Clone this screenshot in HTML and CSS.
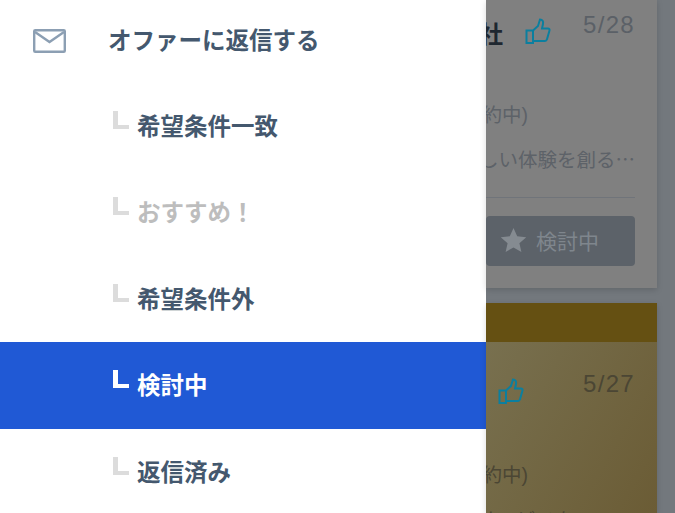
FILE: index.html
```html
<!DOCTYPE html>
<html lang="ja">
<head>
    <meta charset="UTF-8">
    <meta name="viewport" content="width=device-width, initial-scale=1.0">
    <title>オファーに返信する</title>
    <link rel="stylesheet" href="styles.css">
</head>
<body>
    <div class="page">
        <nav class="drawer">
            <div class="menu-head">
                <svg class="mail-icon" width="33" height="24" viewBox="0 0 33 24" fill="none" stroke="#8c9fb3" stroke-width="2.4">
                    <rect x="1.2" y="1.2" width="30.600" height="21.600" rx="1"/>
                    <path d="M2 3l14.500 10L31 3"/>
                </svg>
                <span>オファーに返信する</span>
            </div>
            <a class="menu-item"><i class="branch"></i>希望条件一致</a>
            <a class="menu-item disabled"><i class="branch"></i>おすすめ！</a>
            <a class="menu-item"><i class="branch"></i>希望条件外</a>
            <a class="menu-item active"><i class="branch"></i>検討中</a>
            <a class="menu-item"><i class="branch"></i>返信済み</a>
        </nav>

        <main class="list">
            <div class="card first">
                <div class="card-top">
                    <span class="company">株式会社</span>
                    <svg class="thumb" width="26" height="27" viewBox="0 0 26 27" fill="none" stroke="#0b7f9f" stroke-width="2">
                        <path d="M1.500 12.500h6.500v12.500H1.500zM8 12.500l5-4.500 2-6.500c2.500 0 3.500 2 3 4.500l-1 4.500h6c1.200 0 1.800 1 1.500 2l-2.500 8.800c-.3 1-1 1.700-2 1.700H8"/>
                    </svg>
                    <span class="date">5/28</span>
                </div>
                <p class="line place">東京都渋谷区(集約中)</p>
                <p class="line desc">世界に新しい体験を創る⋯</p>
                <div class="divider"></div>
                <div class="keep-btn">
                    <svg width="25" height="24" viewBox="0 0 25 24"><path fill="#858b91" d="M12.500 0l3.700 8.300 9 .9-6.800 6 2 8.800-7.900-4.600-7.900 4.600 2-8.800-6.800-6 9-.9z"/></svg>
                    <span>検討中</span>
                </div>
            </div>

            <div class="card second">
                <div class="card-band"></div>
                <div class="card-body">
                    <div class="card-top">
                        <svg class="thumb" width="26" height="27" viewBox="0 0 26 27" fill="none" stroke="#0b7f9f" stroke-width="2">
                            <path d="M1.500 12.500h6.500v12.500H1.500zM8 12.500l5-4.500 2-6.500c2.500 0 3.500 2 3 4.500l-1 4.500h6c1.200 0 1.800 1 1.500 2l-2.500 8.800c-.3 1-1 1.700-2 1.700H8"/>
                        </svg>
                        <span class="date">5/27</span>
                    </div>
                    <p class="line place">東京都渋谷区(集約中)</p>
                    <p class="line desc">最新のサービスを</p>
                </div>
            </div>
        </main>
    </div>
</body>
</html>
```

FILE: styles.css
```css
* {
    box-sizing: border-box;
}
html, body {
    margin: 0;
    height: 100%;
}
body {
    font-family: "Liberation Sans", "Noto Sans CJK JP", sans-serif;
    overflow: hidden;
}
.page {
    display: flex;
    height: 513px;
    overflow: hidden;
    background: #73787d;
}
.drawer {
    flex: 0 0 486px;
    background: white;
}
.menu-head {
    display: flex;
    align-items: center;
    height: 82.5px;
    padding: 0 0 5px 33px;
    color: #44586e;
    font-size: 23.500px;
    font-weight: 700;
}
.menu-head span {
    margin-left: 42px;
}
.mail-icon {
    flex: none;
    margin-top: 5px;
}
.menu-item {
    display: flex;
    align-items: center;
    height: 86.5px;
    padding: 0 0 2px 113px;
    color: #44586e;
    font-size: 23.500px;
    font-weight: 700;
}
.branch {
    flex: none;
    width: 16px;
    height: 18px;
    margin: -10px 8px 0 0;
    border-left: 5px solid #dcdcdc;
    border-bottom: 4px solid #dcdcdc;
}
.disabled {
    color: #bdbdbd;
}
.active {
    background: #2059d5;
    color: white;
}
.active .branch {
    border-color: white;
}
.list {
    flex: 0 0 171px;
    min-width: 0;
}
.card {
    overflow: hidden;
    box-shadow: 0 2px 6px rgba(0,0,0,0.15);
}
.first {
    height: 288px;
    padding-right: 22px;
    background: #808080;
}
.second {
    height: 210px;
    margin-top: 15px;
    background: #6f6545;
}
.card-band {
    height: 39px;
    background: #655012;
}
.card-body {
    height: 171px;
    padding-right: 22px;
    background: linear-gradient(120deg, #78704f, #6b5c35);
}
.card-top {
    display: flex;
    justify-content: flex-end;
    height: 100px;
    white-space: nowrap;
}
.company {
    margin-top: 15px;
    color: #1e2730;
    font-size: 24px;
    font-weight: 700;
}
.thumb {
    flex: none;
    margin: 18px 0 0 22px;
}
.date {
    margin: 11px 0 0 32px;
    color: #5b6067;
    font-size: 24px;
    letter-spacing: 1.3px;
}
.second .card-top {
    height: 118px;
}
.second .date {
    margin: 28px 0 0 59px;
    color: #4b4634;
}
.second .thumb {
    margin-top: 36px;
}
.line {
    display: flex;
    justify-content: flex-end;
    margin: 0;
    color: #5d6268;
    font-size: 19.500px;
    line-height: 30px;
    white-space: nowrap;
}
.place {
    margin-right: 107px;
}
.desc {
    margin-top: 15px;
}
.second .place, .second .desc {
    color: #4b4634;
}
.second .desc {
    margin-right: 60px;
}
.divider {
    height: 1px;
    margin-top: 22px;
    background: #70747a;
}
.keep-btn {
    display: flex;
    align-items: center;
    justify-content: flex-end;
    height: 50px;
    margin-top: 18px;
    padding: 0 36px 2px 0;
    gap: 10px;
    background: #5c6269;
    border-radius: 4px;
    color: #7f868d;
    font-size: 21px;
}
```
